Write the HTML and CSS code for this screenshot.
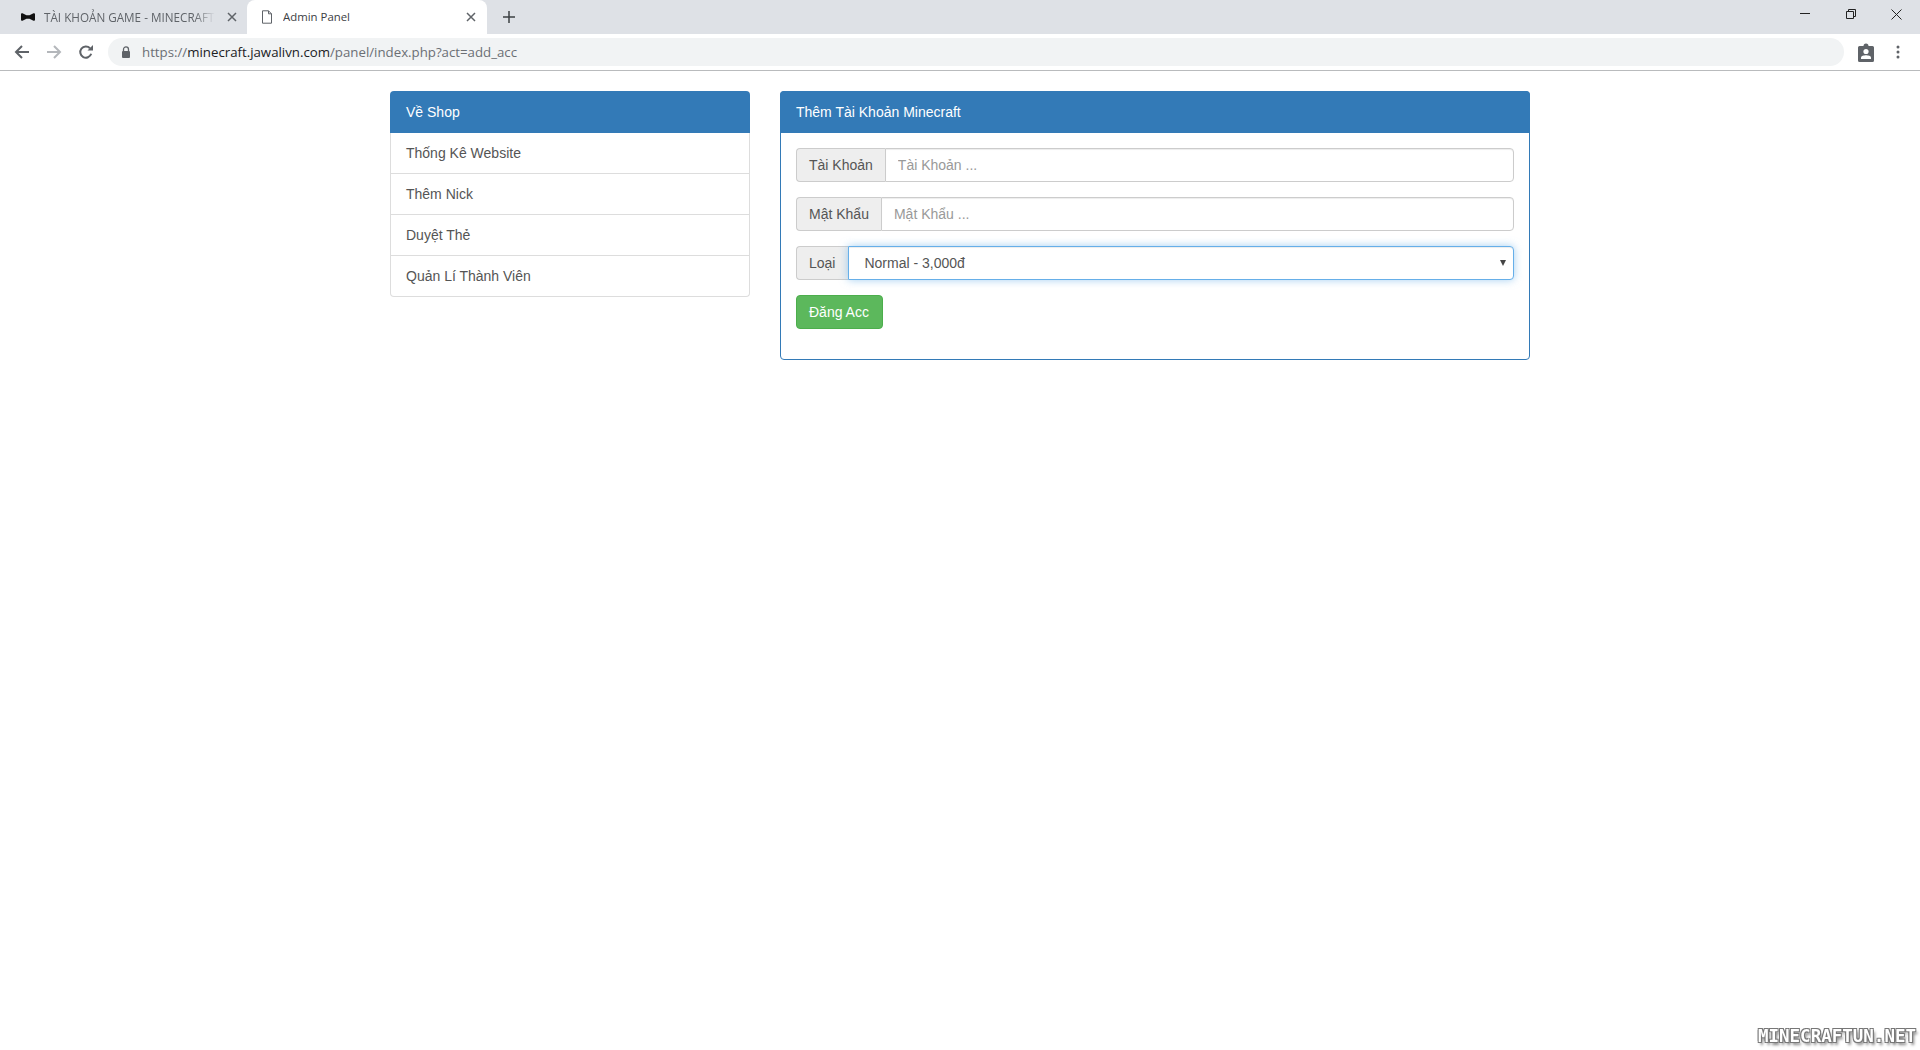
FILE: index.html
```html
<!DOCTYPE html>
<html lang="vi">
<head>
<meta charset="utf-8">
<title>Admin Panel</title>
<link rel="stylesheet" href="styles.css">
</head>
<body>
<header class="browser">
  <div class="tabstrip">
    <div class="tab tab-inactive">
      <svg class="favicon" width="14" height="8" viewBox="0 0 14 8"><path d="M0 1.2C0 .3 1 0 2 .4L5.5 2.2H8.5L12 .4C13 0 14 .3 14 1.2V6.8C14 7.7 13 8 12 7.6L8.5 5.8H5.5L2 7.6C1 8 0 7.7 0 6.8Z" fill="#111"/></svg>
      <span class="tab-title tab-title-fade">TÀI KHOẢN GAME - MINECRAFT</span>
      <svg class="tab-close" width="10" height="10" viewBox="0 0 10 10"><path d="M1 1L9 9M9 1L1 9" stroke="#5f6368" stroke-width="1.5"/></svg>
    </div>
    <div class="tab tab-active">
      <svg class="favicon-doc" width="12" height="14" viewBox="0 0 12 14"><path d="M1.5 .8H7.5L10.5 3.8V13.2H1.5ZM7.5 .8V3.8H10.5" fill="#fff" stroke="#5f6368" stroke-width="1"/></svg>
      <span class="tab-title tab-title-active">Admin Panel</span>
      <svg class="tab-close" width="10" height="10" viewBox="0 0 10 10"><path d="M1 1L9 9M9 1L1 9" stroke="#5f6368" stroke-width="1.5"/></svg>
    </div>
    <svg class="newtab" width="12" height="12" viewBox="0 0 12 12"><path d="M6 0V12M0 6H12" stroke="#3c4043" stroke-width="1.5"/></svg>
    <div class="window-controls">
      <svg width="10" height="10" viewBox="0 0 10 10"><path d="M0 4.5H10" stroke="#222" stroke-width="1"/></svg>
      <svg width="10" height="10" viewBox="0 0 10 10"><path d="M.5 2.5H7.5V9.5H.5ZM2.5 2.5V.5H9.5V7.5H7.5" fill="none" stroke="#222" stroke-width="1"/></svg>
      <svg class="window-close" width="11" height="11" viewBox="0 0 11 11"><path d="M.5 .5L10.5 10.5M10.5 .5L.5 10.5" stroke="#222" stroke-width="1"/></svg>
    </div>
  </div>
  <div class="toolbar">
    <svg class="nav-icon" width="16" height="16" viewBox="0 0 16 16"><path d="M15 8H2M8 2L2 8L8 14" fill="none" stroke="#5f6368" stroke-width="2"/></svg>
    <svg class="nav-icon" width="16" height="16" viewBox="0 0 16 16"><path d="M1 8H14M8 2L14 8L8 14" fill="none" stroke="#b4b7bb" stroke-width="2"/></svg>
    <svg class="nav-icon" width="16" height="16" viewBox="0 0 16 16"><path d="M13.2 9.8A5.6 5.6 0 1 1 12 4.3" fill="none" stroke="#5f6368" stroke-width="2"/><path d="M9.5 6.5H15V1Z" fill="#5f6368"/></svg>
    <div class="omnibox">
      <svg class="lock" width="10" height="12" viewBox="0 0 10 12"><path d="M2.5 5V3.4A2.5 2.5 0 0 1 7.5 3.4V5" fill="none" stroke="#5f6368" stroke-width="1.3"/><rect x="1" y="5" width="8" height="7" rx="1" fill="#5f6368"/></svg>
      <span class="url"><span class="url-muted">https://</span><span class="url-host">minecraft.jawalivn.com</span><span class="url-muted">/panel/index.php?act=add_acc</span></span>
    </div>
    <svg class="profile" width="16" height="19" viewBox="0 0 16 19"><path d="M1.5 3H5.5A2.5 2.5 0 0 1 10.5 3H14.5A1.5 1.5 0 0 1 16 4.5V17.5A1.5 1.5 0 0 1 14.5 19H1.5A1.5 1.5 0 0 1 0 17.5V4.5A1.5 1.5 0 0 1 1.5 3Z" fill="#5f6368"/><circle cx="8" cy="8.5" r="2.6" fill="#fff"/><path d="M3 16V14.5C3 13 6 12.3 8 12.3S13 13 13 14.5V16Z" fill="#fff"/></svg>
    <svg class="menu" width="4" height="14" viewBox="0 0 4 14"><circle cx="2" cy="2" r="1.5" fill="#5f6368"/><circle cx="2" cy="7" r="1.5" fill="#5f6368"/><circle cx="2" cy="12" r="1.5" fill="#5f6368"/></svg>
  </div>
</header>

<main class="container">
  <aside class="col-side">
    <section class="panel panel-side">
      <h3 class="panel-heading">Về Shop</h3>
      <ul class="list">
        <li class="list-item">Thống Kê Website</li>
        <li class="list-item">Thêm Nick</li>
        <li class="list-item">Duyệt Thẻ</li>
        <li class="list-item">Quản Lí Thành Viên</li>
      </ul>
    </section>
  </aside>
  <div class="col-main">
    <section class="panel panel-form">
      <h3 class="panel-heading">Thêm Tài Khoản Minecraft</h3>
      <form class="panel-body">
        <div class="input-group">
          <span class="addon">Tài Khoản</span>
          <input class="control" type="text" placeholder="Tài Khoản ...">
        </div>
        <div class="input-group">
          <span class="addon">Mật Khẩu</span>
          <input class="control" type="text" placeholder="Mật Khẩu ...">
        </div>
        <div class="input-group">
          <span class="addon addon-type">Loại</span>
          <div class="control control-focus">Normal - 3,000đ</div>
        </div>
        <button class="btn-success" type="button">Đăng Acc</button>
      </form>
    </section>
  </div>
</main>
<div class="watermark">MINECRAFTUN.NET</div>
</body>
</html>
```

FILE: styles.css
```css
* { box-sizing: border-box; }
html, body { margin: 0; padding: 0; height: 100%; }
body {
  background: #fff;
  font-family: "Liberation Sans", Arial, sans-serif;
  font-size: 14px;
  line-height: 20px;
  color: #333;
  overflow: hidden;
}

/* Browser chrome */
.browser { height: 71px; border-bottom: 1px solid #b9bbbd; }
.tabstrip {
  height: 34px;
  background: #dee1e6;
  display: flex;
  align-items: stretch;
  padding-left: 8px;
  font-family: "Open Sans", "Noto Sans", sans-serif;
  font-size: 12px;
}
.tab { display: flex; align-items: center; width: 240px; }
.tab-inactive { width: 239px; padding: 0 10px 0 13px; }
.tab-active {
  background: #fff;
  border-radius: 8px 8px 0 0;
  padding: 0 11px 0 14px;
}
.favicon { flex: none; margin-right: 9px; }
.favicon-doc { flex: none; margin-right: 10px; }
.tab-title { flex: 1; white-space: nowrap; overflow: hidden; font-size: 11.5px; }
.tab-title-fade {
  font-size: 11.7px;
  color: #5f6368;
  -webkit-mask-image: linear-gradient(to right, #000 88%, transparent 100%);
  mask-image: linear-gradient(to right, #000 88%, transparent 100%);
  margin-right: 12px;
}
.tab-title-active { color: #3c4043; font-size: 11.4px; }
.tab-close { flex: none; }
.newtab { flex: none; align-self: center; margin-left: 16px; }
.window-controls {
  margin-left: auto;
  padding: 9px 18px 0 0;
  display: flex;
  align-items: flex-start;
  gap: 36px;
}
.window-close { margin-left: -1px; }
.toolbar {
  height: 36px;
  background: #fff;
  display: flex;
  align-items: center;
  padding-left: 14px;
}
.nav-icon { flex: none; margin-right: 16px; }
.nav-icon:nth-of-type(3) { margin-right: 14px; }
.omnibox {
  flex: 1;
  height: 28px;
  border-radius: 14px;
  background: #f1f3f4;
  display: flex;
  align-items: center;
  padding-left: 13px;
  font-family: "Open Sans", "Noto Sans", sans-serif;
  font-size: 13.25px;
}
.lock { flex: none; margin-right: 11px; }
.url { white-space: nowrap; }
.url-muted { color: #6b6f74; }
.url-host { color: #202124; }
.profile { flex: none; margin: 0 22px 0 14px; }
.menu { flex: none; margin-right: 20px; }

/* Page */
.container {
  width: 1170px;
  margin: 20px auto 0;
  display: flex;
  gap: 30px;
  padding: 0 15px;
  align-items: flex-start;
}
.col-side { width: 360px; flex: none; }
.col-main { width: 750px; flex: none; }
.panel { border-radius: 4px; background: #fff; }
.panel-heading {
  margin: 0;
  height: 42px;
  padding: 11px 16px;
  background: #337ab7;
  border-radius: 4px 4px 0 0;
  color: #fff;
  font-size: 14px;
  font-weight: 400;
  line-height: 20px;
}
.list { list-style: none; margin: 0; padding: 0; }
.list-item {
  height: 41px;
  padding: 10px 15px;
  border: 1px solid #ddd;
  border-top: 0;
  color: #555;
}
.list-item:last-child { border-radius: 0 0 4px 4px; }
.panel-form { border: 1px solid #337ab7; }
.panel-form .panel-heading { margin: -1px -1px 0; padding: 11px 16px; }
.panel-body { padding: 15px 15px 30px; }
.input-group { display: flex; height: 34px; margin-bottom: 15px; }
.addon {
  flex: none;
  padding: 6px 12px;
  background: #eee;
  border: 1px solid #ccc;
  border-right: 0;
  border-radius: 4px 0 0 4px;
  color: #555;
}
.addon-type { padding-right: 13px; }
.control {
  flex: 1;
  min-width: 0;
  height: 34px;
  padding: 6px 12px;
  border: 1px solid #ccc;
  border-radius: 0 4px 4px 0;
  background: #fff;
  color: #555;
  font: 14px/20px "Liberation Sans", Arial, sans-serif;
  box-shadow: inset 0 1px 1px rgba(0,0,0,.075);
  outline: 0;
}
.control::placeholder { color: #999; opacity: 1; }
.control-focus {
  position: relative;
  padding-left: 15px;
  border-color: #66afe9;
  box-shadow: inset 0 1px 1px rgba(0,0,0,.075), 0 0 8px rgba(102,175,233,.6);
}
.control-focus::after {
  content: "";
  position: absolute;
  top: 13px;
  right: 7px;
  border-style: solid;
  border-width: 6px 3.5px 0;
  border-color: #444 transparent transparent;
}
.btn-success {
  display: block;
  height: 34px;
  padding: 6px 13px 6px 12px;
  border: 1px solid #4cae4c;
  border-radius: 4px;
  background: #5cb85c;
  color: #fff;
  font: 14px/20px "Liberation Sans", Arial, sans-serif;
  margin-bottom: 0;
}
.watermark {
  position: fixed;
  right: 4px;
  bottom: 5px;
  font-family: "DejaVu Sans Mono", monospace;
  font-weight: 700;
  font-size: 17.5px;
  line-height: 18px;
  letter-spacing: 0;
  color: #fff;
  text-shadow: -1px -1px 0 #777, 1px -1px 0 #777, -1px 1px 0 #777, 1px 1px 0 #777, 2px 3px 3px rgba(0,0,0,.5);
}
```
